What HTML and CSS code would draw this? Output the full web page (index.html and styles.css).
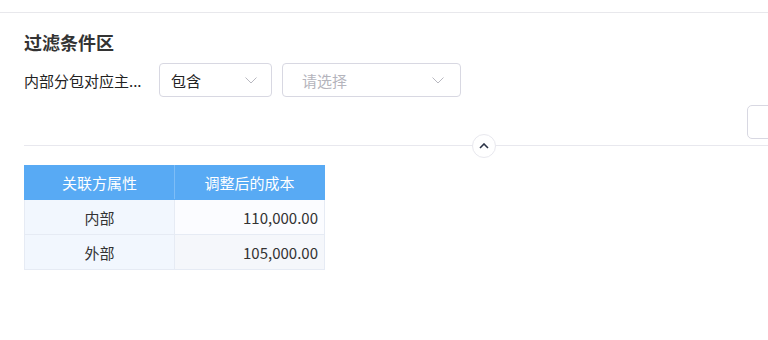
FILE: index.html
```html
<!DOCTYPE html>
<html lang="zh-CN">
<head>
    <meta charset="UTF-8">
    <meta name="viewport" content="width=device-width, initial-scale=1.0">
    <title>过滤条件区</title>
    <link rel="stylesheet" href="styles.css">
</head>
<body>

    <div class="topbar"></div>

    <div class="filter">
        <h2 class="filter-title">过滤条件区</h2>

        <div class="filter-row">
            <label class="filter-label" title="内部分包对应主体名称">内部分包对应主...</label>
            <div class="select select-op">
                <span class="select-value">包含</span>
                <svg class="select-arrow" width="12" height="7" viewBox="0 0 12 7"><path d="M0.5 0.5 L6 6 L11.5 0.5" fill="none" stroke="#b8b8c0" stroke-width="1"/></svg>
            </div>
            <div class="select select-value-box">
                <span class="select-placeholder">请选择</span>
                <svg class="select-arrow" width="12" height="7" viewBox="0 0 12 7"><path d="M0.5 0.5 L6 6 L11.5 0.5" fill="none" stroke="#b8b8c0" stroke-width="1"/></svg>
            </div>
        </div>

        <div class="filter-actions">
            <button class="btn" aria-label="查询"></button>
        </div>

        <div class="divider">
            <span class="collapse-toggle">
                <svg width="10" height="6" viewBox="0 0 10 6"><path d="M1 5 L5 1 L9 5" fill="none" stroke="#2b3346" stroke-width="1.6"/></svg>
            </span>
        </div>
    </div>

    <table class="report">
        <thead>
            <tr>
                <th>关联方属性</th>
                <th>调整后的成本</th>
            </tr>
        </thead>
        <tbody>
            <tr>
                <td class="cell-name">内部</td>
                <td class="cell-num">110,000.00</td>
            </tr>
            <tr class="row-alt">
                <td class="cell-name">外部</td>
                <td class="cell-num">105,000.00</td>
            </tr>
        </tbody>
    </table>

</body>
</html>
```

FILE: styles.css
```css
body {
    font-family: "Noto Sans CJK SC", "Noto Sans", sans-serif;
    background-color: white;
    color: #333;
    margin: 0;
    overflow: hidden;
}
.topbar {
    height: 12px;
    border-bottom: 1px solid #e8e8ec;
}
.filter {
    padding: 16px 0 0 24px;
}
.filter-title {
    margin: 0;
    font-size: 18px;
    line-height: 26px;
    font-weight: bold;
    color: #333;
}
.filter-row {
    display: flex;
    align-items: center;
    margin-top: 8px;
}
.filter-label {
    width: 120px;
    margin-right: 15px;
    font-size: 15px;
    white-space: nowrap;
    color: #222;
}
.select {
    height: 34px;
    box-sizing: border-box;
    border: 1px solid #d8d8e2;
    border-radius: 4px;
    display: flex;
    align-items: center;
    justify-content: space-between;
    font-size: 15px;
}
.select-op {
    width: 113px;
    padding: 0 14px 0 11px;
    margin-right: 10px;
}
.select-value-box {
    width: 179px;
    padding: 0 16px 0 19px;
}
.select-value {
    color: #222;
}
.select-placeholder {
    color: #b4b4bc;
}
.filter-actions {
    display: flex;
    justify-content: flex-end;
    margin-top: 8px;
}
.btn {
    width: 44px;
    height: 34px;
    margin-right: -23px;
    background-color: white;
    border: 1px solid #d8d8e2;
    border-radius: 5px;
}
.divider {
    position: relative;
    margin-top: 6px;
    border-top: 1px solid #e8e8ee;
}
.collapse-toggle {
    position: absolute;
    left: 448px;
    top: -12px;
    width: 22px;
    height: 22px;
    border: 1px solid #e8e8ee;
    border-radius: 50%;
    background-color: white;
    display: flex;
    align-items: center;
    justify-content: center;
}
.report {
    margin: 19px 0 0 24px;
    border-collapse: collapse;
    font-size: 15px;
}
.report th {
    width: 149px;
    height: 33px;
    padding: 0;
    background-color: #58aaf4;
    color: white;
    font-weight: normal;
    border: 1px solid #58aaf4;
    border-right-color: #7dbdf7;
}
.report th:last-child {
    border-right-color: #58aaf4;
}
.report td {
    height: 34px;
    padding: 0 6px;
    border: 1px solid #e6ebf4;
    color: #333;
}
.cell-name {
    text-align: center;
    background-color: #f2f7fe;
}
.cell-num {
    text-align: right;
    background-color: #fbfcff;
}
.row-alt .cell-num {
    background-color: #f5f7fb;
}
```
